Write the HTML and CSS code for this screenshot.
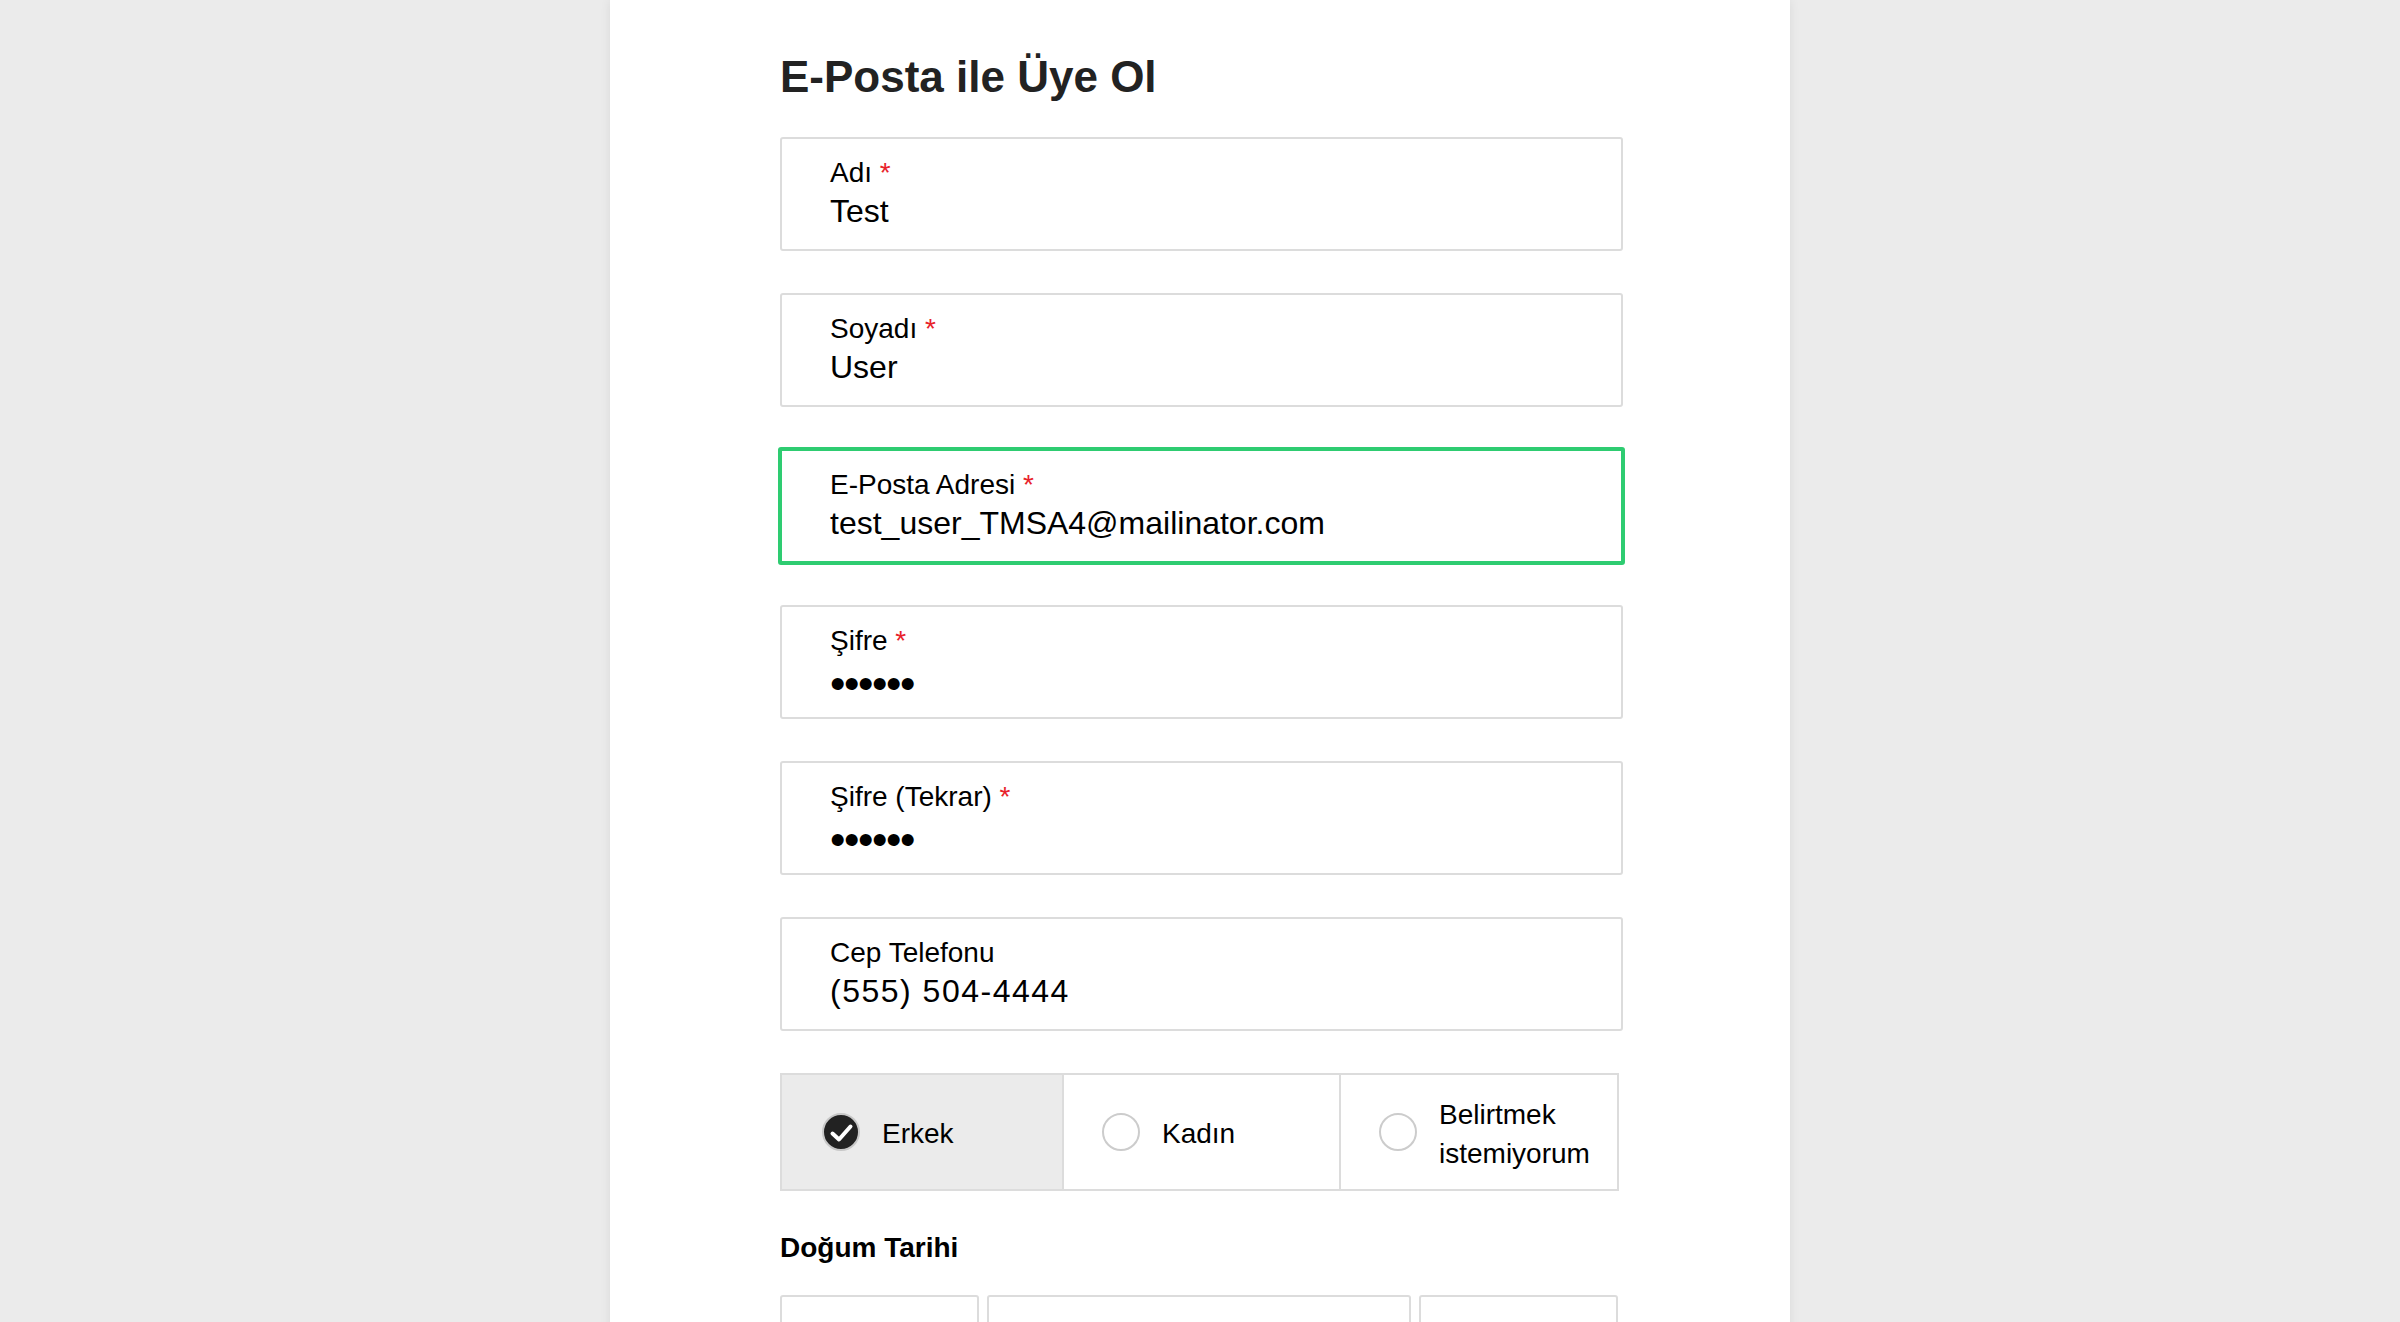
FILE: index.html
```html
<!DOCTYPE html>
<html lang="tr">
<head>
<meta charset="utf-8">
<title>E-Posta ile Üye Ol</title>
<link rel="stylesheet" href="styles.css">
</head>
<body>
<main class="panel">
  <h1 class="title">E-Posta ile Üye Ol</h1>
  <form class="form">
    <div class="fields">
      <div class="field">
        <div class="label">Adı <span class="req">*</span></div>
        <div class="value">Test</div>
      </div>
      <div class="field">
        <div class="label">Soyadı <span class="req">*</span></div>
        <div class="value">User</div>
      </div>
      <div class="field field--focus">
        <div class="label">E-Posta Adresi <span class="req">*</span></div>
        <div class="value">test_user_TMSA4@mailinator.com</div>
      </div>
      <div class="field">
        <div class="label">Şifre <span class="req">*</span></div>
        <div class="value value--pw">••••••</div>
      </div>
      <div class="field">
        <div class="label">Şifre (Tekrar) <span class="req">*</span></div>
        <div class="value value--pw">••••••</div>
      </div>
      <div class="field">
        <div class="label">Cep Telefonu</div>
        <div class="value value--phone">(555) 504-4444</div>
      </div>
      <div class="gender">
        <div class="opt opt--on">
          <svg class="radio-on" width="38" height="38" viewBox="0 0 38 38" aria-hidden="true">
            <circle cx="19" cy="19" r="18" fill="#222" stroke="#c8c8c8" stroke-width="2"/>
            <path d="M10.5 20.5 L17 26.5 L28.5 13.5" fill="none" stroke="#fff" stroke-width="4" stroke-linecap="round" stroke-linejoin="round"/>
          </svg>
          <span class="opt-text">Erkek</span>
        </div>
        <div class="opt">
          <span class="radio"></span>
          <span class="opt-text">Kadın</span>
        </div>
        <div class="opt">
          <span class="radio"></span>
          <span class="opt-text">Belirtmek istemiyorum</span>
        </div>
      </div>
    </div>
    <section class="birth">
      <div class="section-title">Doğum Tarihi</div>
      <div class="date-row">
        <div class="date-box"></div>
        <div class="date-box"></div>
        <div class="date-box"></div>
      </div>
    </section>
  </form>
</main>
</body>
</html>
```
FILE: styles.css
```css
html, body {
  margin: 0;
  padding: 0;
}
body {
  background: #ebebeb;
  font-family: "Liberation Sans", Arial, Helvetica, sans-serif;
  color: #000;
  overflow: hidden;
}
.panel {
  width: 1180px;
  min-height: 1500px;
  margin: 0 auto;
  box-sizing: border-box;
  padding: 51px 0 0 170px;
  background: #fff;
  box-shadow: 0 0 10px rgba(0, 0, 0, 0.08);
}
.title {
  margin: 0 0 34px;
  font-size: 44px;
  line-height: 52px;
  font-weight: 700;
  color: #222;
}
.form {
  width: 843px;
  display: flex;
  flex-direction: column;
}
.fields {
  display: flex;
  flex-direction: column;
  gap: 42px;
}
.field {
  border: 2px solid #dcdcdc;
  border-radius: 3px;
  padding: 16px 48px 18px;
}
.field--focus {
  border: 4px solid #2ecc71;
  margin: -2px;
}
.label {
  font-size: 28px;
  line-height: 36px;
}
.req {
  color: #e8222a;
}
.value {
  font-size: 32px;
  line-height: 40px;
}
.value--pw {
  font-size: 44px;
  letter-spacing: -1.4px;
  line-height: 31px;
  padding-top: 9px;
}
.value--phone {
  letter-spacing: 1.5px;
}
.gender {
  width: 839px;
  box-sizing: border-box;
  border: 2px solid #dcdcdc;
  display: grid;
  grid-template-columns: 280px 277px 1fr;
  height: 118px;
}
.opt {
  display: flex;
  align-items: center;
  gap: 22px;
  padding: 3px 16px 0 40px;
  background: #fff;
}
.opt + .opt {
  border-left: 2px solid #dcdcdc;
  padding-left: 38px;
}
.opt--on {
  background: #ebebeb;
}
.radio, .radio-on {
  flex: none;
  width: 38px;
  height: 38px;
  box-sizing: border-box;
  margin-top: -3px;
}
.radio {
  border: 2px solid #cccccc;
  border-radius: 50%;
  background: #fff;
}
.opt-text {
  font-size: 28px;
  line-height: 39px;
}
.birth {
  margin-top: 40px;
}
.section-title {
  font-size: 28px;
  line-height: 34px;
  font-weight: 700;
}
.date-row {
  margin-top: 30px;
  width: 838px;
  display: grid;
  grid-template-columns: 199px 1fr 199px;
  gap: 8px;
}
.date-box {
  height: 114px;
  box-sizing: border-box;
  border: 2px solid #dcdcdc;
  border-radius: 3px;
}
```
